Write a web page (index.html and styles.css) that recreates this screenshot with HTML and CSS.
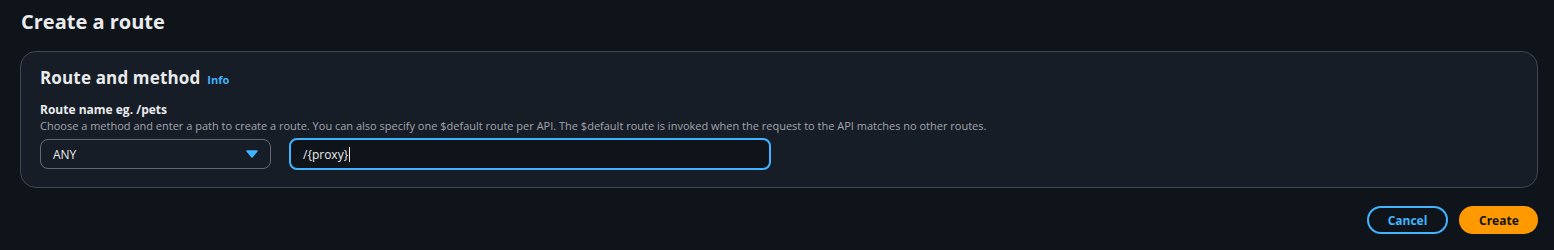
FILE: index.html
```html
<!DOCTYPE html>
<html>
<head>
<meta charset="utf-8">
<link rel="stylesheet" href="styles.css">
</head>
<body>
<div class="page">
  <h1 class="title">Create a route</h1>
  <section class="card">
    <div class="card-head">
      <h2 class="card-title">Route and method</h2>
      <a class="info">Info</a>
    </div>
    <div class="field">
      <div class="label">Route name eg. /pets</div>
      <div class="desc">Choose a method and enter a path to create a route. You can also specify one $default route per API. The $default route is invoked when the request to the API matches no other routes.</div>
      <div class="controls">
        <div class="select">
          <span>ANY</span>
          <svg class="caret" width="12" height="8" viewBox="0 0 12 8"><path d="M1 1 H11 L6 7 Z" fill="#42b4ff" stroke="#42b4ff" stroke-width="1.5" stroke-linejoin="round"/></svg>
        </div>
        <div class="input"><span>/{proxy}</span><span class="cursor"></span></div>
      </div>
    </div>
  </section>
  <div class="actions">
    <button class="btn btn-normal">Cancel</button>
    <button class="btn btn-primary">Create</button>
  </div>
</div>
</body>
</html>
```
FILE: styles.css
```css
html, body {
  margin: 0;
  padding: 0;
  background: #0f141a;
}
body {
  font-family: "Open Sans", "Noto Sans", sans-serif;
  color: #c6c6cd;
}
.page {
  padding: 6px 16px 0 20px;
}
.title {
  margin: 0 0 0 1px;
  font-size: 20px;
  line-height: 32px;
  font-weight: 700;
  color: #e9ebed;
  letter-spacing: 0;
}
.card {
  margin-top: 13px;
  height: 137px;
  box-sizing: border-box;
  border: 1px solid #424650;
  border-radius: 16px;
  background: #161d26;
  padding: 13px 19px 0 19px;
}
.card-head {
  display: flex;
  align-items: baseline;
  gap: 7px;
}
.card-title {
  margin: 0;
  font-size: 17px;
  line-height: 26px;
  font-weight: 700;
  color: #e9ebed;
  letter-spacing: 0.15px;
}
.info {
  font-size: 11px;
  font-weight: 700;
  color: #42b4ff;
}
.field {
  margin-top: 11px;
}
.label {
  font-size: 12px;
  line-height: 16px;
  font-weight: 700;
  color: #e9ebed;
}
.desc {
  font-size: 11px;
  line-height: 16px;
  color: #a4a4ad;
  letter-spacing: 0;
  white-space: nowrap;
}
.controls {
  display: flex;
  align-items: center;
  gap: 18px;
  margin-top: 4px;
}
.select {
  width: 231px;
  height: 30px;
  box-sizing: border-box;
  border: 1px solid #656871;
  border-radius: 8px;
  display: flex;
  align-items: center;
  justify-content: space-between;
  padding: 0 12px 0 12px;
  font-size: 12px;
  color: #e9ebed;
}
.caret {
  display: block;
}
.input {
  width: 482px;
  height: 32px;
  box-sizing: border-box;
  border: 2px solid #42b4ff;
  border-radius: 8px;
  background: #0f141a;
  display: flex;
  align-items: center;
  padding: 0 12px;
  font-size: 12px;
  color: #e9ebed;
}
.cursor {
  display: inline-block;
  width: 1px;
  height: 15px;
  background: #e9ebed;
  margin-left: 1px;
}
.actions {
  display: flex;
  justify-content: flex-end;
  gap: 11px;
  margin-top: 18px;
}
.btn {
  font-family: inherit;
  font-size: 12px;
  font-weight: 700;
  height: 28px;
  border-radius: 20px;
  padding: 0 18px;
  cursor: pointer;
}
.btn-normal {
  background: transparent;
  border: 2px solid #42b4ff;
  color: #42b4ff;
  width: 81px;
}
.btn-primary {
  background: #ff9900;
  border: 2px solid #ff9900;
  color: #0f141a;
  width: 79px;
}
```
